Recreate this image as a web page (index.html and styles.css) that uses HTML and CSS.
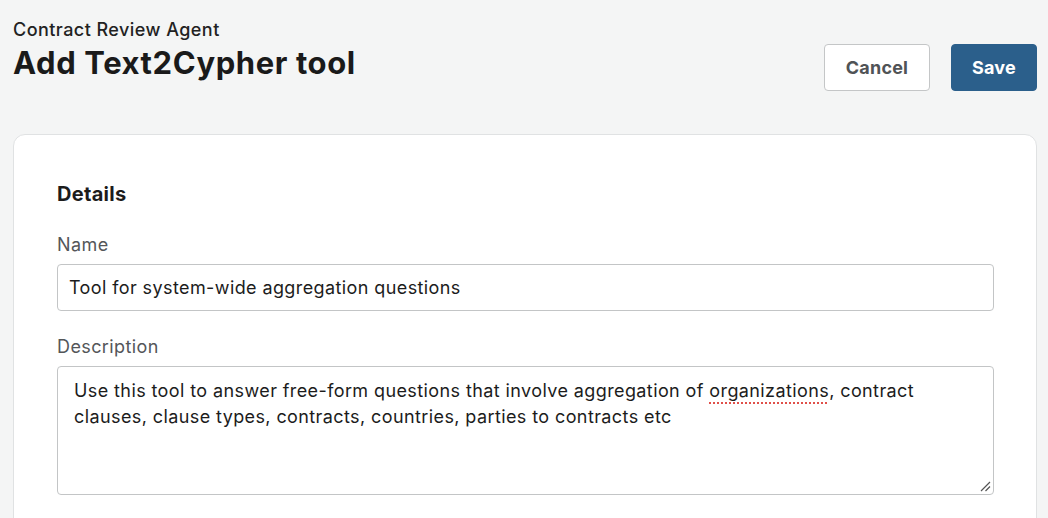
FILE: index.html
```html
<!DOCTYPE html>
<html>
<head>
<meta charset="utf-8">
<link rel="stylesheet" href="styles.css">
</head>
<body>
<div class="page">
  <header class="header">
    <div class="titles">
      <div class="subtitle">Contract Review Agent</div>
      <h1 class="title">Add Text2Cypher tool</h1>
    </div>
    <div class="actions">
      <button class="btn btn-secondary">Cancel</button>
      <button class="btn btn-primary">Save</button>
    </div>
  </header>
  <section class="card">
    <h2 class="section-title">Details</h2>
    <div class="field">
      <label class="label">Name</label>
      <div class="input">Tool for system-wide aggregation questions</div>
    </div>
    <div class="field">
      <label class="label">Description</label>
      <div class="textarea">Use this tool to answer free-form questions that involve aggregation of <span class="spell">organizations</span>, contract clauses, clause types, contracts, countries, parties to contracts etc<svg class="grip" width="12" height="12" viewBox="0 0 12 12"><path d="M11 2 L2 11 M11 6.5 L6.5 11" stroke="#555" stroke-width="1.2" fill="none"/></svg></div>
    </div>
  </section>
</div>
</body>
</html>
```
FILE: styles.css
```css
* { box-sizing: border-box; }
html, body { margin: 0; padding: 0; }
body {
  background: #f4f5f5;
  font-family: "Inter", "Noto Sans", sans-serif;
  color: #1c1c1c;
  width: 1048px;
  height: 518px;
  overflow: hidden;
}
.page { padding: 18px 11px 0 13px; }
.header {
  display: flex;
  justify-content: space-between;
  align-items: flex-start;
}
.subtitle {
  font-size: 18px;
  font-weight: 500;
  letter-spacing: 0.45px;
  line-height: 24px;
  color: #222;
}
.title {
  margin: 2px 0 0;
  font-size: 31px;
  font-weight: 700;
  line-height: 38px;
  letter-spacing: 0.6px;
  color: #1a1a1a;
}
.actions {
  display: flex;
  gap: 21px;
  margin-top: 26px;
}
.btn {
  height: 47px;
  border-radius: 4px;
  font-family: inherit;
  font-size: 18px;
  font-weight: 700;
  letter-spacing: 0.2px;
  padding: 0;
  cursor: pointer;
}
.btn-secondary {
  width: 106px;
  background: #fff;
  border: 1px solid #c4c6c7;
  color: #505356;
}
.btn-primary {
  width: 86px;
  background: #2b5f8b;
  border: 1px solid #2b5f8b;
  color: #fff;
}
.card {
  margin-top: 43px;
  background: #fff;
  border: 1px solid #e0e2e3;
  border-radius: 12px;
  padding: 46px 42px 40px 43px;
  height: 420px;
}
.section-title {
  margin: 0 0 27px;
  font-size: 20px;
  font-weight: 700;
  letter-spacing: 0.3px;
  line-height: 26px;
  color: #1c1c1c;
}
.field { margin-bottom: 25px; }
.label {
  display: block;
  font-size: 18px;
  letter-spacing: 0.4px;
  line-height: 22px;
  color: #545659;
  margin-bottom: 8px;
}
.input {
  height: 47px;
  border: 1px solid #c3c5c6;
  border-radius: 4px;
  padding: 0 11px;
  display: flex;
  align-items: center;
  font-size: 18px;
  letter-spacing: 0.4px;
  color: #1c1c1c;
}
.textarea {
  position: relative;
  height: 129px;
  border: 1px solid #c3c5c6;
  border-radius: 4px;
  padding: 11px 40px 11px 16px;
  font-size: 18px;
  letter-spacing: 0.4px;
  line-height: 26px;
  color: #1c1c1c;
}
.spell {
  text-decoration: underline dotted #e0504a;
  text-decoration-thickness: 2px;
  text-underline-offset: 5px;
}
.grip {
  position: absolute;
  right: 2px;
  bottom: 2px;
}
```
